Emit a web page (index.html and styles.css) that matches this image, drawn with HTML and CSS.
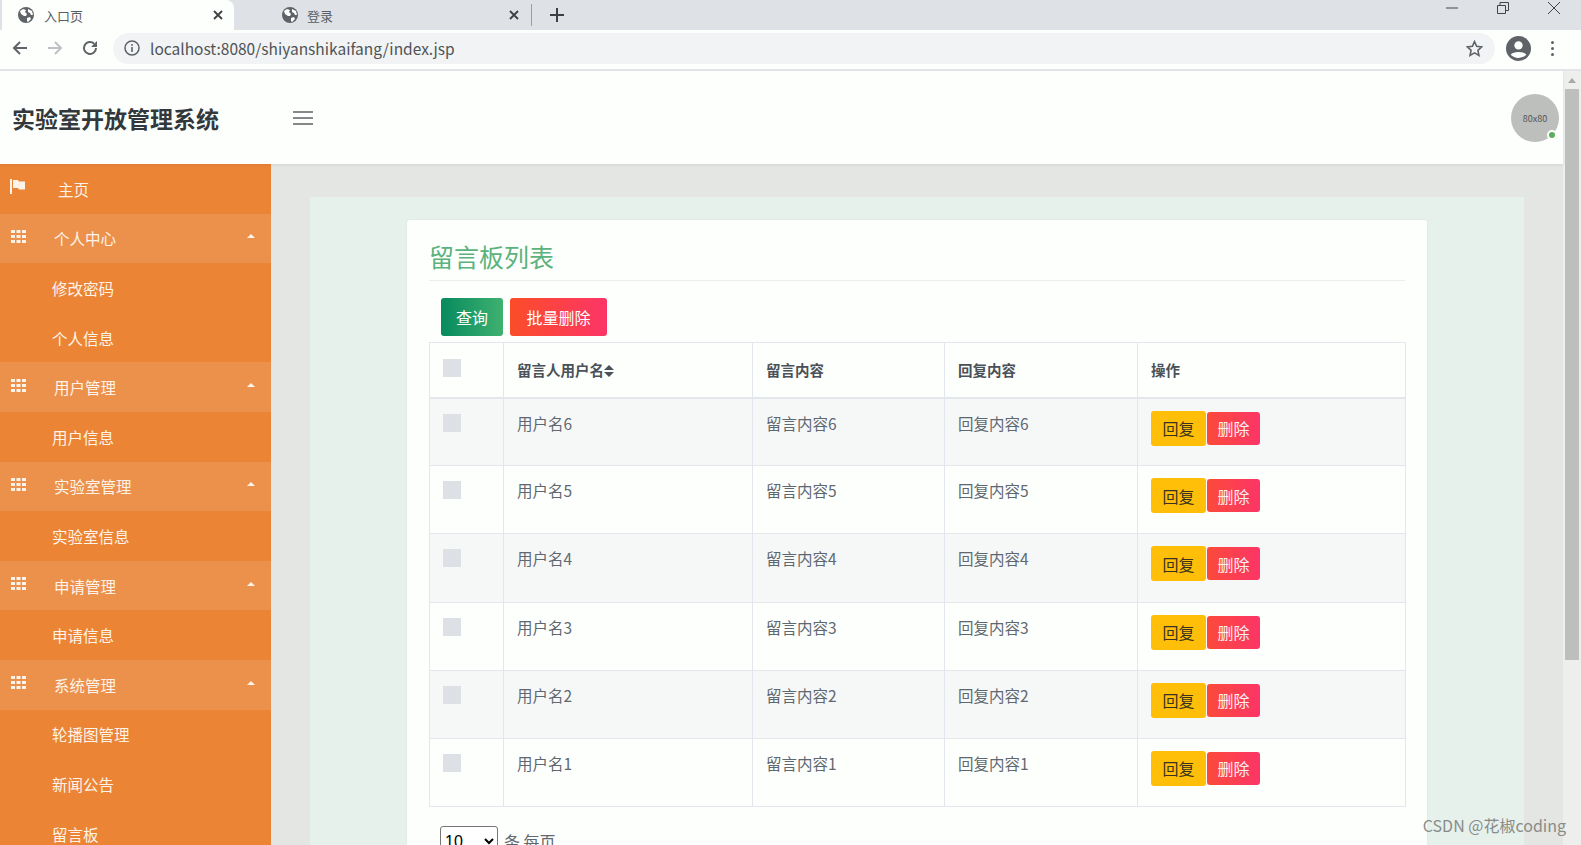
FILE: index.html
```html
<!DOCTYPE html>
<html lang="zh-CN">
<head>
    <meta charset="UTF-8">
    <title>实验室开放管理系统</title>
    <link rel="stylesheet" href="styles.css">
</head>
<body>
    <svg class="icon-defs" width="0" height="0">
        <symbol id="globe" viewBox="0 0 16 16">
            <circle cx="8" cy="8" r="8" fill="#5f6368"/>
            <path d="M2 4l3-2 3 1-1 2 2 2-1 2H6L3 7zM10 2l4 2 1 4-2 0-1-2-2-1zM9 11l3-1 1 2-3 3-1-1z" fill="#fff"/>
        </symbol>
        <symbol id="close" viewBox="0 0 12 12">
            <path d="M2 2l8 8M10 2l-8 8" stroke="#3c4043" stroke-width="1.8" fill="none"/>
        </symbol>
        <symbol id="grid" viewBox="0 0 15 13">
            <path d="M0 0h4v3H0zM5.500 0h4v3h-4zM11 0h4v3h-4zM0 5h4v3H0zM5.500 5h4v3h-4zM11 5h4v3h-4zM0 10h4v3H0zM5.500 10h4v3h-4zM11 10h4v3h-4z" fill="#fdf3e8"/>
        </symbol>
    </svg>

    <div class="tabstrip">
        <div class="tab active">
            <svg class="tab-globe"><use href="#globe"/></svg>
            <span class="tab-title">入口页</span>
            <svg class="tab-close"><use href="#close"/></svg>
        </div>
        <div class="tab">
            <svg class="tab-globe"><use href="#globe"/></svg>
            <span class="tab-title">登录</span>
            <svg class="tab-close"><use href="#close"/></svg>
        </div>
        <svg class="new-tab" viewBox="0 0 14 14"><path d="M7 0v14M0 7h14" stroke="#3c4043" stroke-width="2"/></svg>
        <div class="win-controls">
            <svg viewBox="0 0 12 12"><path d="M0 6h12" stroke="#444" stroke-width="1"/></svg>
            <svg viewBox="0 0 12 12"><path d="M.5 3.500h8v8h-8zM3 3.500V.5h8.500v8H8.500" stroke="#444" fill="none"/></svg>
            <svg viewBox="0 0 12 12"><path d="M0 0l12 12M12 0L0 12" stroke="#444" fill="none"/></svg>
        </div>
    </div>

    <div class="toolbar">
        <svg class="tool" viewBox="0 0 16 16"><path d="M15 8H2M8 2L2 8l6 6" stroke="#5f6368" stroke-width="2" fill="none"/></svg>
        <svg class="tool" viewBox="0 0 16 16"><path d="M1 8h13M8 2l6 6-6 6" stroke="#bdc1c6" stroke-width="2" fill="none"/></svg>
        <svg class="tool" viewBox="0 0 16 16"><path d="M14 8a6 6 0 1 1-1.800-4.300" stroke="#5f6368" stroke-width="2" fill="none"/><path d="M15 1v6H9z" fill="#5f6368"/></svg>
        <div class="address">
            <svg class="info" viewBox="0 0 16 16"><circle cx="8" cy="8" r="7" stroke="#5f6368" stroke-width="1.500" fill="none"/><path d="M8 7v5M8 4v1.800" stroke="#5f6368" stroke-width="1.600"/></svg>
            <span class="url">localhost:8080/shiyanshikaifang/index.jsp</span>
            <svg class="star" viewBox="0 0 16 16"><path d="M8 1.500l2 4.500 4.800.5-3.600 3.200 1 4.800L8 12.100l-4.200 2.400 1-4.800L1.200 6.500 6 6z" stroke="#5f6368" stroke-width="1.500" fill="none"/></svg>
        </div>
        <svg class="profile" viewBox="0 0 24 24"><circle cx="12" cy="12" r="12" fill="#5f6368"/><circle cx="12" cy="9" r="4" fill="#fff"/><path d="M4.500 18c2-3.500 13-3.500 15 0-3.500 4-11.500 4-15 0z" fill="#fff"/></svg>
        <div class="kebab"><i></i><i></i><i></i></div>
    </div>

    <div class="viewport">
        <div class="page">
            <header class="site-header">
                <h1 class="brand">实验室开放管理系统</h1>
                <div class="burger"><i></i><i></i><i></i></div>
                <div class="avatar">80x80<span class="online"></span></div>
            </header>

            <div class="page-body">
                <nav class="sidebar">
                    <div class="nav-item home">
                        <svg class="nav-flag" viewBox="0 0 15 15"><path d="M0 0h2v15H0zM3 1h5l1 1.500h6v8H9L8 9H3z" fill="#fdf3e8"/></svg>
                        <span>主页</span>
                    </div>
                    <div class="nav-group"><svg class="nav-grid"><use href="#grid"/></svg><span>个人中心</span><b class="caret"></b></div>
                    <div class="nav-item">修改密码</div>
                    <div class="nav-item">个人信息</div>
                    <div class="nav-group"><svg class="nav-grid"><use href="#grid"/></svg><span>用户管理</span><b class="caret"></b></div>
                    <div class="nav-item">用户信息</div>
                    <div class="nav-group"><svg class="nav-grid"><use href="#grid"/></svg><span>实验室管理</span><b class="caret"></b></div>
                    <div class="nav-item">实验室信息</div>
                    <div class="nav-group"><svg class="nav-grid"><use href="#grid"/></svg><span>申请管理</span><b class="caret"></b></div>
                    <div class="nav-item">申请信息</div>
                    <div class="nav-group"><svg class="nav-grid"><use href="#grid"/></svg><span>系统管理</span><b class="caret"></b></div>
                    <div class="nav-item">轮播图管理</div>
                    <div class="nav-item">新闻公告</div>
                    <div class="nav-item">留言板</div>
                </nav>

                <main class="content">
                    <div class="panel">
                        <section class="card">
                            <h2 class="card-title">留言板列表</h2>
                            <div class="actions">
                                <button class="btn btn-query">查询</button>
                                <button class="btn btn-batch">批量删除</button>
                            </div>
                            <table class="data-table">
                                <thead>
                                    <tr>
                                        <th class="col-check"><input type="checkbox" class="check"></th>
                                        <th class="col-user">留言人用户名<span class="sort"></span></th>
                                        <th class="col-msg">留言内容</th>
                                        <th class="col-reply">回复内容</th>
                                        <th>操作</th>
                                    </tr>
                                </thead>
                                <tbody>
                                    <tr>
                                        <td><input type="checkbox" class="check"></td>
                                        <td>用户名6</td><td>留言内容6</td><td>回复内容6</td>
                                        <td><button class="btn-reply">回复</button><button class="btn-del">删除</button></td>
                                    </tr>
                                    <tr>
                                        <td><input type="checkbox" class="check"></td>
                                        <td>用户名5</td><td>留言内容5</td><td>回复内容5</td>
                                        <td><button class="btn-reply">回复</button><button class="btn-del">删除</button></td>
                                    </tr>
                                    <tr>
                                        <td><input type="checkbox" class="check"></td>
                                        <td>用户名4</td><td>留言内容4</td><td>回复内容4</td>
                                        <td><button class="btn-reply">回复</button><button class="btn-del">删除</button></td>
                                    </tr>
                                    <tr>
                                        <td><input type="checkbox" class="check"></td>
                                        <td>用户名3</td><td>留言内容3</td><td>回复内容3</td>
                                        <td><button class="btn-reply">回复</button><button class="btn-del">删除</button></td>
                                    </tr>
                                    <tr>
                                        <td><input type="checkbox" class="check"></td>
                                        <td>用户名2</td><td>留言内容2</td><td>回复内容2</td>
                                        <td><button class="btn-reply">回复</button><button class="btn-del">删除</button></td>
                                    </tr>
                                    <tr>
                                        <td><input type="checkbox" class="check"></td>
                                        <td>用户名1</td><td>留言内容1</td><td>回复内容1</td>
                                        <td><button class="btn-reply">回复</button><button class="btn-del">删除</button></td>
                                    </tr>
                                </tbody>
                            </table>
                            <div class="pager">
                                <select class="page-size"><option>10</option></select>
                                <span>条 每页</span>
                            </div>
                        </section>
                    </div>
                </main>
            </div>
        </div>
        <div class="scrollbar">
            <span class="scroll-up"></span>
            <span class="scroll-thumb"></span>
        </div>
    </div>

    <svg class="pointer" viewBox="0 0 18 28"><path d="M5 1.500c1-.8 2.500-.5 2.500 1V11l1-.2V9.500c1-.8 2.500-.5 2.500.5v1.200c1-.6 2.300-.3 2.500.6v1c1-.4 2.300 0 2.500 1v6c0 3-1.500 5-2 6.500H7.500C6.500 24 2.500 20 1.200 17.500c-.6-1.500 1-2.500 2-1.500L5 18z" fill="#fff" stroke="#111" stroke-width="1.400" stroke-linejoin="round"/></svg>
    <div class="watermark">CSDN @花椒coding</div>
</body>
</html>
```

FILE: styles.css
```css
:root {
    --orange: #eb8435;
    --orange-light: #ec914c;
    --page-white: #fdfffc;
    --line: #e3e6ec;
    --text: #5f6870;
    --heading: #4a5159;
}

* {
    margin: 0;
    padding: 0;
    box-sizing: border-box;
    font-family: "Noto Sans CJK SC", "Noto Sans", sans-serif;
}

html,
body {
    height: 100%;
    overflow: hidden;
}

body {
    display: flex;
    flex-direction: column;
    background: var(--page-white);
}

.icon-defs {
    position: absolute;
}

/* browser chrome */
.tabstrip {
    height: 30px;
    flex: none;
    display: flex;
    align-items: center;
    background: #dee1e6;
}

.tab {
    width: 234px;
    height: 30px;
    display: flex;
    align-items: center;
    padding-left: 18px;
    font-size: 13px;
    color: #5a5e63;
    flex: none;
}

.tab + .tab {
    width: 298px;
    padding-left: 48px;
    padding-right: 11px;
    border-right: 1px solid #9aa0a6;
    height: 22px;
}

.tab.active {
    background: var(--page-white);
    border-radius: 0 8px 0 0;
    margin-left: 2px;
    width: 232px;
    padding-left: 16px;
    padding-right: 10px;
}

.tab-globe {
    width: 16px;
    height: 16px;
    flex: none;
}

.tab-title {
    flex: 1;
    margin-left: 10px;
}

.tab + .tab .tab-title {
    margin-left: 9px;
}

.tab-close {
    width: 12px;
    height: 12px;
    flex: none;
}

.new-tab {
    width: 14px;
    height: 14px;
    margin-left: 18px;
}

.win-controls {
    margin-left: auto;
    display: flex;
    gap: 39px;
    padding-right: 21px;
    align-self: flex-start;
    padding-top: 2px;
}

.win-controls svg {
    width: 12px;
    height: 12px;
}

.toolbar {
    height: 41px;
    flex: none;
    display: flex;
    align-items: center;
    padding: 0 0 3px 12px;
    background: var(--page-white);
    border-bottom: 2px solid #e3e5ea;
}

.tool {
    width: 16px;
    height: 16px;
    margin-right: 19px;
    flex: none;
}

.address {
    width: 1382px;
    height: 31px;
    margin-left: -4px;
    display: flex;
    align-items: center;
    padding: 0 12px 0 11px;
    background: #f1f3f4;
    border-radius: 16px;
}

.info {
    width: 16px;
    height: 16px;
}

.url {
    flex: 1;
    margin-left: 10px;
    font-size: 15.500px;
    color: #4f5357;
}

.star {
    width: 17px;
    height: 17px;
}

.profile {
    width: 25px;
    height: 25px;
    margin-left: 11px;
}

.kebab {
    margin-left: 20px;
    display: flex;
    flex-direction: column;
    gap: 3px;
}

.kebab i {
    width: 3px;
    height: 3px;
    border-radius: 50%;
    background: #5f6368;
}

/* page */
.viewport {
    flex: 1;
    min-height: 0;
    display: flex;
}

.page {
    flex: 1;
    min-width: 0;
    display: flex;
    flex-direction: column;
}

.scrollbar {
    width: 18px;
    flex: none;
    display: flex;
    flex-direction: column;
    align-items: center;
    background: #eeefed;
}

.scroll-up {
    margin-top: 7px;
    border-left: 4px solid transparent;
    border-right: 4px solid transparent;
    border-bottom: 5px solid #a8aaa8;
}

.scroll-thumb {
    width: 14px;
    height: 571px;
    margin-top: 6px;
    background: #bdbfbc;
}

.site-header {
    height: 93px;
    flex: none;
    position: relative;
    display: flex;
    align-items: center;
    padding-left: 12px;
    background: var(--page-white);
    box-shadow: 0 1px 3px rgba(0,0,0,0.08);
    z-index: 1;
}

.brand {
    width: 281px;
    font-size: 23px;
    font-weight: 700;
    color: #33383c;
}

.burger {
    display: flex;
    flex-direction: column;
    gap: 4px;
}

.burger i {
    width: 20px;
    height: 2px;
    background: #84888a;
}

.avatar {
    position: absolute;
    right: 4px;
    top: 23px;
    width: 48px;
    height: 48px;
    border-radius: 50%;
    background: #bdbfbc;
    display: flex;
    align-items: center;
    justify-content: center;
    font-size: 9px;
    color: #555;
}

.online {
    position: absolute;
    right: 2px;
    bottom: 2px;
    width: 10px;
    height: 10px;
    border: 2px solid var(--page-white);
    border-radius: 50%;
    background: #5cad5f;
}

.page-body {
    flex: 1;
    min-height: 0;
    display: flex;
    overflow: hidden;
}

.sidebar {
    width: 271px;
    flex: none;
    background: var(--orange);
    font-size: 15.500px;
    color: #fdf3e8;
}

.nav-item,
.nav-group {
    height: 49.600px;
    display: flex;
    align-items: center;
    padding-left: 52px;
    flex: none;
}

.nav-item.home {
    padding-left: 10px;
}

.nav-item.home span {
    margin-left: 33px;
}

.nav-group {
    padding-left: 11px;
    background: var(--orange-light);
}

.nav-flag {
    width: 15px;
    height: 15px;
    margin-top: -4px;
}

.nav-grid {
    width: 15px;
    height: 13px;
    margin-top: -4px;
    margin-right: 28px;
    flex: none;
}

.caret {
    margin-left: auto;
    margin-right: 16px;
    margin-top: -4px;
    border-left: 4px solid transparent;
    border-right: 4px solid transparent;
    border-bottom: 4px solid #fdf3e8;
}

.content {
    flex: 1;
    min-width: 0;
    padding: 33px 39px 0;
    background: #e4e6e3;
}

.panel {
    height: 100%;
    padding: 23px 97px 0;
    background: #e7f1ec;
}

.card {
    height: 640px;
    padding: 18px 22px;
    background: var(--page-white);
    border-radius: 3px;
    box-shadow: 0 0 2px rgba(0,0,0,0.08);
}

.card-title {
    height: 43px;
    font-size: 25px;
    font-weight: 400;
    line-height: 36px;
    color: #5cb27c;
    border-bottom: 1px solid #eceeee;
}

.actions {
    display: flex;
    gap: 7px;
    padding: 17px 0 6px 12px;
}

.btn {
    height: 38px;
    border: none;
    border-radius: 3px;
    font-size: 16px;
    color: #fff;
}

.btn-query {
    width: 62px;
    background: linear-gradient(90deg, #078a5f, #3fb170);
}

.btn-batch {
    width: 97px;
    background: linear-gradient(90deg, #fb4d28, #fc3567);
}

.data-table {
    width: 977px;
    table-layout: fixed;
    border-collapse: collapse;
    font-size: 15.500px;
    color: var(--text);
}

.data-table th,
.data-table td {
    border: 1px solid var(--line);
    padding: 12px 13px;
    text-align: left;
    vertical-align: top;
    font-weight: 400;
}

.data-table th {
    height: 55px;
    padding-top: 16px;
    font-weight: 700;
    font-size: 14.500px;
    color: var(--heading);
    border-bottom-width: 2px;
}

.data-table td {
    height: 68.200px;
    line-height: 24px;
}

.data-table tbody tr:nth-child(odd) {
    background: #f6f8f8;
}

.col-check {
    width: 74px;
}

.col-user {
    width: 249px;
}

.col-msg {
    width: 192px;
}

.col-reply {
    width: 193px;
}

.check {
    appearance: none;
    display: block;
    width: 18px;
    height: 18px;
    background: #dde1e6;
    margin-top: 3px;
}

.data-table th .check {
    margin-top: 0;
}

.sort {
    display: inline-block;
    position: relative;
    width: 10px;
    height: 12px;
    vertical-align: -1px;
}

.sort::before,
.sort::after {
    content: "";
    position: absolute;
    left: 0;
    border-left: 5px solid transparent;
    border-right: 5px solid transparent;
}

.sort::before {
    top: 0;
    border-bottom: 5px solid var(--heading);
}

.sort::after {
    bottom: 0;
    border-top: 5px solid var(--heading);
}

.btn-reply,
.btn-del {
    height: 35px;
    border: none;
    border-radius: 3px;
    font-size: 16px;
    vertical-align: top;
}

.btn-reply {
    width: 55px;
    background: #ffbe07;
    color: #3a3220;
}

.btn-del {
    width: 53px;
    height: 33px;
    margin: 1px 0 0 1px;
    background: linear-gradient(90deg, #fb4a3a, #fc3567);
    color: #fdeff0;
}

.pager {
    display: flex;
    align-items: center;
    gap: 6px;
    padding: 19px 0 0 11px;
    font-size: 16px;
    color: var(--text);
}

.page-size {
    width: 58px;
    height: 30px;
    font-size: 16px;
    font-family: "Liberation Sans", sans-serif;
    background: #fff;
    border: 1px solid #767676;
    border-radius: 3px;
}

/* screenshot overlays */
.pointer {
    position: absolute;
    left: 1505px;
    top: 87px;
    width: 18px;
    height: 28px;
}

.watermark {
    position: absolute;
    right: 15px;
    bottom: 8px;
    font-size: 16px;
    color: #8a8c8a;
}
```
